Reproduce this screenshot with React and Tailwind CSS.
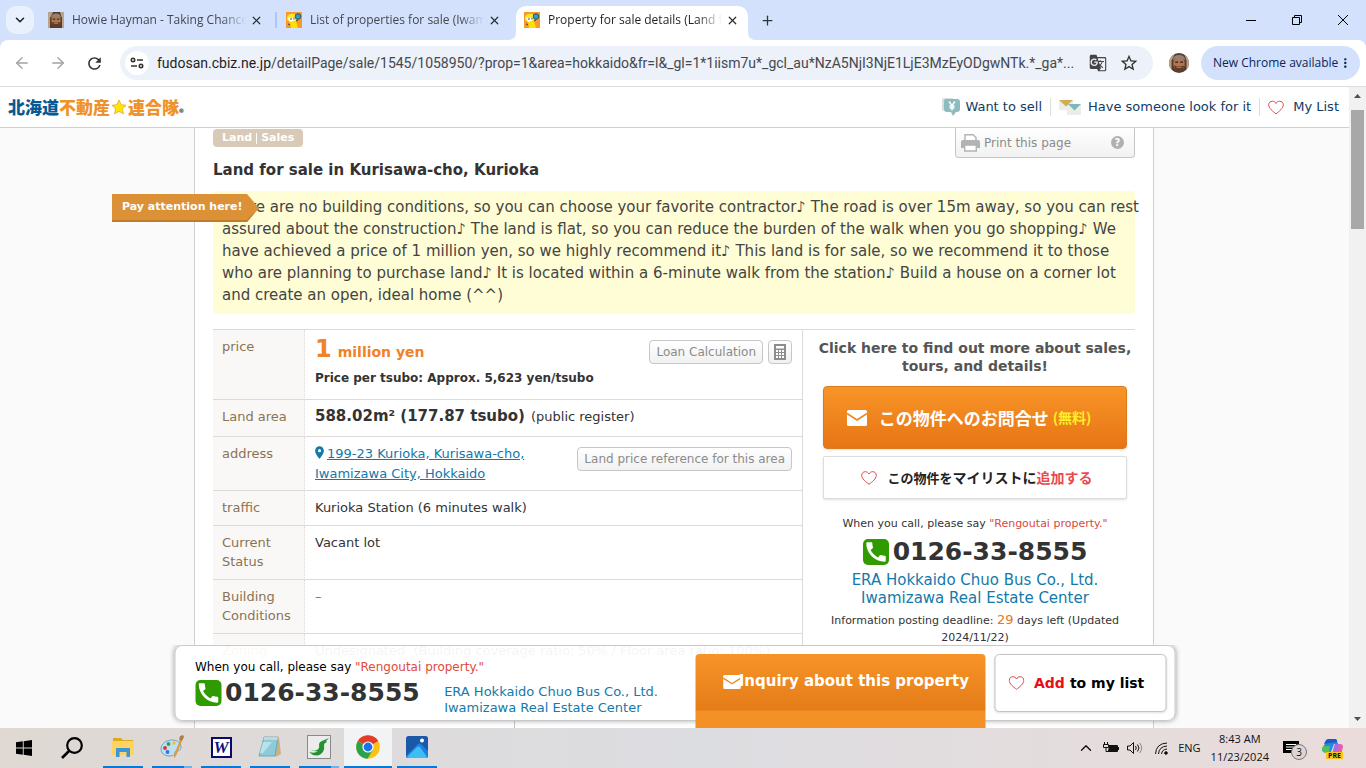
import React from "react";
import { ArrowLeft, ArrowRight, ChevronDown, ChevronUp, Plus, X } from "lucide-react";
import { MdCall, MdGTranslate, MdRefresh, MdStarBorder, MdMoreVert, MdLocationOn } from "react-icons/md";

const ui = "font-['Open_Sans','Noto_Sans',sans-serif]";
const site = "font-['DejaVu_Sans','Noto_Sans_CJK_JP',sans-serif]";

function FaceIcon({ className }) {
  return (
    <svg viewBox="0 0 16 16" className={className} aria-hidden="true">
      <rect width="16" height="16" fill="#5b3a26" />
      <path d="M0 0h5L2 6v10H0zM16 0h-4l2 6v10h2z" fill="#b9a48d" />
      <ellipse cx="8" cy="8.5" rx="4.6" ry="6" fill="#b1764f" />
      <path d="M3 6Q3 1.500 8 1.500T13 6L11.500 4.500h-7z" fill="#8a8580" />
      <path d="M5 7.200h2.200M9 7.200h2.200" stroke="#33190d" strokeWidth="1" />
      <path d="M4 10q4 1.500 8 0-.5 5-4 5t-4-5" fill="#5e3b2b" />
      <path d="M6 11.500h4" stroke="#c0765a" strokeWidth=".8" />
    </svg>
  );
}

function SiteFavicon() {
  return (
    <svg viewBox="0 0 16 16" className="h-4 w-4 shrink-0" aria-hidden="true">
      <rect width="16" height="16" fill="#f79a2a" />
      <path d="M1 5Q3 1 8 2l3 2-1 5-6 1-3-2z" fill="#ffe71c" />
      <path d="M2 5.500l4 .5 3-1.500-.5 4-3.500 1.500-2-1z" fill="#fff" />
      <path d="M4 10l6-1 2 7H5z" fill="#ffe000" />
      <circle cx="12" cy="4.500" r="2.800" fill="#2d9fc6" stroke="#1c3d50" strokeWidth=".8" />
      <path d="M5 6v2M8 5.500v2M2 12l2 1M10 9l2-1" stroke="#333" strokeWidth=".9" />
    </svg>
  );
}

function Mail({ className }) {
  return (
    <svg viewBox="0 0 20 16" className={className} aria-hidden="true">
      <rect width="20" height="16" rx="1.500" fill="#fff" />
      <path d="M0 3.500l10 6.500 10-6.500" fill="none" stroke="#ee8722" strokeWidth="1.600" />
    </svg>
  );
}

function Heart({ className }) {
  return (
    <svg viewBox="0 0 16 14" className={className} fill="none" stroke="#e0474c" aria-hidden="true">
      <path d="M8 13.300C5 11 .7 7.800.7 4.300.7 2.200 2.300.7 4.300.7 6 .7 7.300 1.600 8 3 8.700 1.600 10 .7 11.700.7c2 0 3.600 1.500 3.600 3.600C15.300 7.800 11 11 8 13.300z" />
    </svg>
  );
}

function Tab({ title, icon, active, label }) {
  return (
    <div className={active ? "relative mt-[6px] flex h-[34px] w-[232px] items-center rounded-t-[10px] bg-white pb-[6px] pl-2" : "relative mt-[6px] flex h-[34px] w-[238px] items-center pb-[6px] pl-2"}>
      {active && (
        <svg viewBox="0 0 8 8" className="absolute bottom-0 -left-2 h-2 w-2" aria-hidden="true">
          <path d="M8 0v8H0Q8 8 8 0z" fill="#fff" />
        </svg>
      )}
      {active && (
        <svg viewBox="0 0 8 8" className="absolute -right-2 bottom-0 h-2 w-2" aria-hidden="true">
          <path d="M0 0v8h8Q0 8 0 0z" fill="#fff" />
        </svg>
      )}
      {icon}
      <a
        href="#tab"
        className={active ? "ml-2 w-[174px] overflow-hidden text-[12px] whitespace-nowrap text-[#1f1f1f] [mask-image:linear-gradient(to_right,black_86%,transparent)]" : "ml-2 w-[174px] overflow-hidden text-[12px] whitespace-nowrap text-[#44474e] [mask-image:linear-gradient(to_right,black_86%,transparent)]"}
      >
        {title}
      </a>
      <button aria-label={label} className="ml-[2px] flex h-4 w-4 items-center justify-center text-[#2b2b2e]">
        <X size={13} strokeWidth={2.2} />
      </button>
    </div>
  );
}

function BrowserChrome() {
  return (
    <div className={ui}>
      <div className="flex h-10 items-start bg-[#d3e1fd]">
        <button aria-label="Search tabs" className="mt-[6px] mr-[6px] ml-[6px] flex h-7 w-7 items-center justify-center rounded-[10px] bg-[#eaf1fe]">
          <ChevronDown size={14} strokeWidth={2.6} className="text-[#1f1f1f]" />
        </button>
        <nav aria-label="Tabs" className="flex">
          <Tab label="Close tab 1" title="Howie Hayman - Taking Chance" icon={<FaceIcon className="h-4 w-4 shrink-0" />} />
          <div className="relative flex">
            <span className="absolute top-3 -left-[3px] h-4 w-[2px] bg-[#a8c7fa]" />
            <Tab label="Close tab 2" title="List of properties for sale (Iwam" icon={<SiteFavicon />} />
          </div>
          <Tab active label="Close tab 3" title="Property for sale details (Land fo" icon={<SiteFavicon />} />
        </nav>
        <button aria-label="New tab" className="mt-2 ml-[7px] flex h-6 w-6 items-center justify-center text-[#333]">
          <Plus size={15} strokeWidth={2} />
        </button>
        <div className="ml-auto flex text-black">
          <button aria-label="Minimize" className="flex h-10 w-[46px] items-center justify-center">
            <svg viewBox="0 0 10 10" className="h-[10px] w-[10px]" stroke="currentColor"><path d="M0 5.500h10" /></svg>
          </button>
          <button aria-label="Restore" className="flex h-10 w-[46px] items-center justify-center">
            <svg viewBox="0 0 10 10" className="h-[10px] w-[10px]" fill="none" stroke="currentColor"><path d="M.5 2.500h7v7h-7zM2.500 2.500v-2h7v7h-2" /></svg>
          </button>
          <button aria-label="Close window" className="flex h-10 w-[46px] items-center justify-center">
            <svg viewBox="0 0 10 10" className="h-[10px] w-[10px]" stroke="currentColor"><path d="M0 0l10 10M10 0L0 10" /></svg>
          </button>
        </div>
      </div>
      <div className="bg-[#d3e1fd]">
        <div className="flex h-[47px] items-center rounded-t-[8px] border-b border-[#dedede] bg-white pr-[6px] pl-[13px]">
          <button aria-label="Back" className="mr-[18px] text-[#a3a3a5]"><ArrowLeft size={18} strokeWidth={1.8} /></button>
          <button aria-label="Forward" className="mr-[18px] text-[#a3a3a5]"><ArrowRight size={18} strokeWidth={1.8} /></button>
          <button aria-label="Reload" className="mr-4 text-[#333]"><MdRefresh size={19} /></button>
          <div className="flex h-[34px] min-w-0 flex-1 items-center rounded-full bg-[#ecf1fa] pr-[14px] pl-[5px]">
            <button aria-label="View site information" className="mr-2 flex h-6 w-6 shrink-0 items-center justify-center rounded-full bg-white">
              <svg viewBox="0 0 14 12" className="h-3 w-[14px]" fill="none" stroke="#333" strokeWidth="1.600">
                <circle cx="3" cy="3" r="1.700" /><path d="M7 3h6M1 9h6" /><circle cx="11" cy="9" r="1.700" />
              </svg>
            </button>
            <a href="#url" className="flex-1 truncate font-['Roboto',sans-serif] text-[14px] text-[#45484d]">
              <span className="text-[#1f1f1f]">fudosan.cbiz.ne.jp</span>
              /detailPage/sale/1545/1058950/?prop=1&amp;area=hokkaido&amp;fr=l&amp;_gl=1*1iism7u*_gcl_au*NzA5NjI3NjE1LjE3MzEyODgwNTk.*_ga*...
            </a>
            <button aria-label="Translate this page" className="ml-3 text-[#444]"><MdGTranslate size={18} /></button>
            <button aria-label="Bookmark this tab" className="ml-3 text-[#333]"><MdStarBorder size={20} /></button>
          </div>
          <button aria-label="Profile" className="mr-3 ml-4 h-5 w-5 overflow-hidden rounded-full"><FaceIcon className="h-5 w-5" /></button>
          <button className="flex h-[34px] w-[159px] items-center justify-between rounded-full bg-[#d3e1fd] pr-[7px] pl-3 text-[12px] text-[#0b2559]">
            <span className="whitespace-nowrap">New Chrome available</span>
            <MdMoreVert size={18} />
          </button>
        </div>
      </div>
    </div>
  );
}

function SiteHeader() {
  return (
    <header className="flex h-[41px] shrink-0 items-center border-b border-[#cfcfcf] bg-white pr-[10px] pl-2">
      <a href="#home" className="flex items-center font-['Noto_Sans_CJK_JP',sans-serif] text-[17px] leading-6 font-black">
        <span className="text-[#075a94]">北海道</span>
        <span className="text-[#f0922b]">不動産</span>
        <svg viewBox="0 0 16 16" className="mx-px h-4 w-4" aria-hidden="true">
          <path d="M8 1l2.100 4.700 5 .6-3.700 3.500 1 5L8 12.300 3.600 14.800l1-5L.9 6.300l5-.6z" fill="#ffe800" stroke="#f0a02b" strokeWidth=".8" />
        </svg>
        <span className="text-[#f0922b]">連合隊</span>
        <span className="self-end text-[9px] leading-3 text-[#444]">®</span>
      </a>
      <nav aria-label="Site" className="ml-auto flex items-center text-[13px] whitespace-nowrap text-[#123a63]">
        <a href="#sell" className="flex items-center">
          <svg viewBox="0 0 18 18" className="mr-[5px] h-[18px] w-[18px]" aria-hidden="true">
            <path d="M0 2Q0 0 2 0h9v13H2Q0 13 0 11z" fill="#dcdcd8" />
            <path d="M2 3q0-2 2-2h11q3 0 3 3v7q0 3-3 3h-1l-3 4-2-4H5q-3 0-3-3z" fill="#8abcc0" />
            <path d="M7 3.500l3 4 3-4M10 7.500v5M7.500 8h5M7.500 10h5" fill="none" stroke="#fff" strokeWidth="1.400" />
          </svg>
          Want to sell
        </a>
        <span className="mx-2 h-[18px] w-px bg-[#ddd]" />
        <a href="#look" className="flex items-center">
          <svg viewBox="0 0 22 15" className="mr-[7px] h-[15px] w-[22px]" aria-hidden="true">
            <path d="M0 0h14v10H0zM8 4h14v11H8z" fill="#ecece9" /><path d="M0 0h14L7 6.500z" fill="#d1ad59" /><path d="M9 4h13l-6.500 6.500z" fill="#7db7bd" />
          </svg>
          Have someone look for it
        </a>
        <span className="mx-2 h-[18px] w-px bg-[#ddd]" />
        <a href="#list" className="flex items-center"><Heart className="mr-[9px] h-[15px] w-4" />My List</a>
      </nav>
    </header>
  );
}

const greyButton = "h-6 rounded-[4px] border border-[#c6c6c6] bg-linear-to-b from-white to-[#f1f1f1] text-[12px] whitespace-nowrap text-[#8b8b8b]";

function Row({ label, height, children }) {
  return (
    <tr className={height}>
      <th scope="row" className="w-[92px] border-r border-b border-r-[#ddd] border-b-[#dedbd6] bg-[#faf8f6] [border-right-style:dotted] px-[9px] pt-[7px] pb-[5px] text-left align-top font-normal text-[#8a7355]">{label}</th>
      <td className="border-b border-[#dedbd6] px-[10px] pt-[7px] pb-[5px] align-top">{children}</td>
    </tr>
  );
}

function Details() {
  return (
    <table className="w-[590px] shrink-0 border-separate border-spacing-0 border-r border-[#dedbd6] text-[13px] leading-[19px] text-[#333]">
      <tbody>
        <Row label="price" height="h-[70px]">
          <div className="flex items-start justify-between">
            <div className="font-bold whitespace-nowrap">
              <p className="text-[14px] leading-6 text-[#f08228]"><span className="mr-[6px] text-[24px]">1</span>million yen</p>
              <p className="text-[12px] leading-7">Price per tsubo: Approx. 5,623 yen/tsubo</p>
            </div>
            <div className="mt-[3px] flex gap-[5px]">
              <button className={greyButton + " px-[6px]"}>Loan Calculation</button>
              <button aria-label="Open calculator" className={greyButton + " flex w-6 items-center justify-center"}>
                <svg viewBox="0 0 12 16" className="h-4 w-3" aria-hidden="true">
                  <rect width="12" height="16" fill="#8d8d8d" />
                  <path d="M2 2h8v2.500H2zM2 6h2v2H2zM5 6h2v2H5zM8 6h2v2H8zM2 9h2v2H2zM5 9h2v2H5zM8 9h2v2H8zM2 12h2v2H2zM5 12h2v2H5zM8 12h2v2H8z" fill="#fff" />
                </svg>
              </button>
            </div>
          </div>
        </Row>
        <Row label="Land area" height="h-[37px]">
          <b className="mr-[6px] text-[15px]">588.02m² (177.87 tsubo)</b>(public register)
        </Row>
        <Row label="address" height="h-[54px]">
          <div className="flex items-start justify-between">
            <a href="#map" className="leading-5 whitespace-nowrap text-[#1478a8]">
              <MdLocationOn size={15} className="-ml-[3px] inline-block align-[-2px]" /><span className="underline">199-23 Kurioka, Kurisawa-cho,<br />Iwamizawa City, Hokkaido</span>
            </a>
            <button className={greyButton + " mt-[3px] px-[6px]"}>Land price reference for this area</button>
          </div>
        </Row>
        <Row label="traffic" height="h-[35px]">Kurioka Station (6 minutes walk)</Row>
        <Row label={<>Current<br />Status</>} height="h-[54px]">Vacant lot</Row>
        <Row label={<>Building<br />Conditions</>} height="h-[54px]"><span className="text-[#777]">–</span></Row>
        <Row label="Zoning" height="h-[54px]">Undesignated &nbsp;(Building coverage ratio: 50% / Floor area ratio: 100%)</Row>
      </tbody>
    </table>
  );
}

function Phone() {
  return (
    <span className="flex items-center gap-1">
      <span className="flex h-[26px] w-[26px] items-center justify-center rounded-[5px] bg-[#2f9b00] text-white"><MdCall size={26} /></span>
      <b className="text-[25px] leading-[30px] whitespace-nowrap text-[#333]">0126-33-8555</b>
    </span>
  );
}

function Contact() {
  return (
    <aside className="flex flex-1 flex-col items-center pl-3 text-center text-[#333]">
      <h2 className="mt-[9px] text-[14px] leading-[18px] font-bold whitespace-nowrap text-[#555]">Click here to find out more about sales,<br />tours, and details!</h2>
      <button className="mt-[11px] flex h-[63px] w-[304px] items-center justify-center rounded-[4px] border border-[#dc7a20] bg-linear-to-b from-[#f79427] to-[#e87514] pr-3 font-['Noto_Sans_CJK_JP',sans-serif] text-[17px] font-bold whitespace-nowrap text-white shadow">
        <Mail className="mr-3 h-4 w-5" />この物件へのお問合せ<span className="ml-1 text-[14px] text-[#ffee28]">(無料)</span>
      </button>
      <button className="mt-[7px] flex h-[43px] w-[304px] items-center justify-center rounded-[2px] border border-[#ddd] bg-white pl-1 font-['Noto_Sans_CJK_JP',sans-serif] text-[14px] font-bold whitespace-nowrap text-[#222] shadow-sm">
        <Heart className="mr-[10px] h-[14px] w-4" /><span className="text-[13px]">この物件を</span>マイリストに<span className="text-[#e8494c]">追加する</span>
      </button>
      <p className="mt-4 text-[11px] leading-[18px] whitespace-nowrap">When you call, please say <span className="text-[#d9483e]">"Rengoutai property."</span></p>
      <div className="mt-1"><Phone /></div>
      <a href="#agency" className="mt-1 text-[15px] leading-[18px] whitespace-nowrap text-[#1579aa]">ERA Hokkaido Chuo Bus Co., Ltd.<br />Iwamizawa Real Estate Center</a>
      <p className="mt-1 text-[11px] leading-[17px] whitespace-nowrap">Information posting deadline: <span className="text-[13px] text-[#e87424]">29</span> days left (Updated<br />2024/11/22)</p>
    </aside>
  );
}

function Listing() {
  return (
    <article className="mx-auto h-full w-full max-w-[960px] border-x border-[#d0d0d0] bg-white px-[18px]">
      <div className="flex items-start justify-between">
        <p className="mt-px flex h-[18px] items-center rounded-[4px] bg-[#d8cab6] px-[9px] text-[11px] font-bold text-white">
          Land<span className="mx-1 h-[11px] w-px bg-white" />Sales
        </p>
        <button className="flex h-[30px] w-[180px] items-center rounded-b-[4px] border border-t-0 border-[#c6c6c6] bg-linear-to-b from-white to-[#f1f1f1] px-[5px] text-[12px] text-[#8b8b8b]">
          <svg viewBox="0 0 19 18" className="mr-[4px] h-[18px] w-[19px]" aria-hidden="true">
            <path d="M4 7V.7h8L15 3.500V7" fill="#fff" stroke="#b3b3b3" strokeWidth="1.400" />
            <path d="M0 8q0-2 2-2h15q2 0 2 2v6H0z" fill="#b3b3b3" />
            <path d="M3.700 11h11.600v6H3.700z" fill="#fff" stroke="#b3b3b3" strokeWidth="1.400" />
          </svg>
          Print this page
          <span className="mr-[5px] ml-auto flex h-[13px] w-[13px] items-center justify-center rounded-full bg-[#b0b0b0] text-[10px] font-bold text-white">?</span>
        </button>
      </div>
      <h1 className="text-[15px] leading-6 font-bold text-[#333]">Land for sale in Kurisawa-cho, Kurioka</h1>
      <div className="relative mt-[9px] rounded-[3px] bg-[#fffdd5] px-[9px] pt-[5px] pb-2">
        <p className="text-[15px] leading-[22px] whitespace-nowrap text-[#444]">
          There are no building conditions, so you can choose your favorite contractor♪ The road is over 15m away, so you can rest<br />
          assured about the construction♪ The land is flat, so you can reduce the burden of the walk when you go shopping♪ We<br />
          have achieved a price of 1 million yen, so we highly recommend it♪ This land is for sale, so we recommend it to those<br />
          who are planning to purchase land♪ It is located within a 6-minute walk from the station♪ Build a house on a corner lot<br />
          and create an open, ideal home (^^)
        </p>
        <div className="absolute top-[3px] -left-[101px] flex">
          <span className="flex h-7 w-[135px] items-center border-b-2 border-[#c27a2a] bg-[#dc9136] pl-[10px] text-[11px] font-bold whitespace-nowrap text-white">Pay attention here!</span>
          <svg viewBox="0 0 12 28" className="h-7 w-3" aria-hidden="true"><path d="M0 0l12 14L0 28z" fill="#dc9136" /><path d="M0 26l10.300-10 1.700-2L0 28z" fill="#c27a2a" /></svg>
        </div>
      </div>
      <div className="mt-[15px] flex border-t border-[#dedbd6]">
        <Details />
        <Contact />
      </div>
      <div className="h-10 w-[302px] border-r border-[#c9c6c2]" />
    </article>
  );
}

function ContactBar() {
  return (
    <div className="absolute bottom-0 left-1/2 h-[83px] w-[1011px] -translate-x-1/2 overflow-hidden px-[5px] text-black">
      <div className="flex h-[76px] items-start rounded-[8px] border border-[#c9c9c9] bg-white/95 pr-2 pl-5 shadow-[0_0_5px_rgba(0,0,0,0.35)]">
        <div>
          <p className="mt-3 text-[12px] leading-[18px] whitespace-nowrap">When you call, please say <span className="text-[#e04a3c]">"Rengoutai property."</span></p>
          <div className="mt-[2px]"><Phone /></div>
        </div>
        <a href="#agency" className="mt-[38px] -ml-10 text-[13px] leading-4 whitespace-nowrap text-[#1579aa]">ERA Hokkaido Chuo Bus Co., Ltd.<br />Iwamizawa Real Estate Center</a>
        <div className="ml-auto flex gap-[9px] pt-[8px]">
          <button className="flex h-[75px] w-[290px] items-start justify-end rounded-t-[4px] bg-[linear-gradient(to_bottom,#f79429_0px,#e57c18_56px,#f39026_57px)] pt-4 pr-4 text-[15px] font-bold whitespace-nowrap text-white">
            <Mail className="mt-[5px] -mr-[3px] h-[14px] w-[19px]" />Inquiry about this property
          </button>
          <button className="flex h-[58px] w-[172px] items-center rounded-[5px] border border-[#c4c4c4] bg-white pl-[13px] text-[14px] font-bold whitespace-nowrap shadow-sm">
            <Heart className="mr-[10px] h-[14px] w-4" /><span className="mr-[5px] text-[#e60f14]">Add</span>to my list
          </button>
        </div>
      </div>
    </div>
  );
}

function TaskItem({ label, active, line, children }) {
  return (
    <button aria-label={label} className={active ? "flex h-10 w-12 flex-col items-center bg-[#f2f3f5]" : "flex h-10 w-12 flex-col items-center"}>
      <span className="flex flex-1 items-center">{children}</span>
      {line && <span className={line} />}
    </button>
  );
}

const fullLine = "h-[2px] w-10 bg-[#0a78d6]";
const groupLine = "h-[2px] w-10 bg-[linear-gradient(to_right,#0a78d6_32px,#6fb1ea_32px)]";

function Taskbar() {
  return (
    <footer className={"flex h-10 shrink-0 items-center bg-linear-to-r from-[#dfd8d3] via-[#dcdde1] to-[#eadcda] text-[11px] text-[#111] " + ui}>
      <TaskItem label="Start">
        <svg viewBox="0 0 16 16" className="h-4 w-4"><path d="M0 2.200L6.800 1.300v6.200H0zM7.700 1.200L16 0v7.500H7.700zM0 8.400h6.800v6.300L0 13.700zM7.700 8.400H16V16l-8.300-1.200z" /></svg>
      </TaskItem>
      <TaskItem label="Search">
        <svg viewBox="0 0 22 22" className="h-[22px] w-[22px]" fill="none" stroke="#000" strokeWidth="2.200"><circle cx="13.500" cy="8.500" r="7.300" /><path d="M8 14L1 21" strokeWidth="2.600" /></svg>
      </TaskItem>
      <div className="ml-[3px] flex gap-px">
        <TaskItem label="File Explorer" line={fullLine}>
          <svg viewBox="0 0 22 20" className="h-5 w-[22px]">
            <path d="M1 1h8l2 2h10v15H1z" fill="#e0a91c" /><path d="M0 4h22v14H0z" fill="#fbd463" /><path d="M4 20v-9h14v9h-3.500v-5h-7v5z" fill="#3b95d6" />
          </svg>
        </TaskItem>
        <TaskItem label="Paint" line={groupLine}>
          <svg viewBox="0 0 24 24" className="h-6 w-6">
            <path d="M1 14C1 9 6 5 12 5s9 3 9 7-3 4-5 4 0 5-6 5-9-3-9-7z" fill="#bfe0f3" stroke="#6da5c7" />
            <circle cx="5" cy="13" r="1.900" fill="#d33" /><circle cx="8.500" cy="9" r="1.900" fill="#39a34a" /><circle cx="14" cy="8" r="1.700" fill="#f3c22b" /><circle cx="7.500" cy="17" r="1.900" fill="#3c72d8" />
            <path d="M20 5l2 1-6 15-2 2v-3z" fill="#e1983f" /><path d="M19 5l1-4 3-1 1 2-2 4z" fill="#b07d4d" />
          </svg>
        </TaskItem>
        <TaskItem label="Word" line={fullLine}>
          <span className="flex h-[21px] w-[21px] items-center justify-center border-2 border-[#0a0a6e] bg-white font-['Liberation_Serif',serif] text-[17px] leading-none font-bold text-[#12127e] italic">W</span>
        </TaskItem>
        <TaskItem label="Notepad" line={fullLine}>
          <svg viewBox="0 0 24 22" className="h-[22px] w-6"><path d="M7 1h14l2 17-5 3z" fill="#c9b28a" /><path d="M6 1h14l-3 19H1z" fill="#8ecbd9" stroke="#5d9fb0" strokeWidth=".8" /><path d="M6 1h14l-.5 3h-14z" fill="#c7d4d8" /><path d="M5 6h9L5 17H2z" fill="#b9e3ec" /></svg>
        </TaskItem>
        <TaskItem label="Drawing tablet" line={groupLine}>
          <svg viewBox="0 0 24 24" className="h-6 w-6"><rect x=".5" y=".5" width="23" height="23" fill="#ececec" stroke="#8a8a8a" /><path d="M2 14q4 3 8 1 3-2 2-5 0-3 3-4l7-3-3 3 1 1q-3 1-3 3 1 6-3 9-6 4-12-2 6 2 9-1-5 1-9-2z" fill="#259135" /></svg>
        </TaskItem>
        <TaskItem active label="Chrome" line="h-[2px] w-12 bg-[#0a78d6]">
          <svg viewBox="0 0 24 24" className="h-6 w-6">
            <circle cx="12" cy="12" r="11.800" fill="#fbc116" />
            <path d="M12 12L1.800 6A11.800 11.800 0 0 1 22.200 6z" fill="#e33b2e" />
            <path d="M12 12l-5-2.500L1.800 6A11.800 11.800 0 0 0 11.500 23.800l5.400-9z" fill="#2ba24c" />
            <circle cx="12" cy="12" r="5.600" fill="#fff" /><circle cx="12" cy="12" r="4.400" fill="#1a73e8" />
          </svg>
        </TaskItem>
        <TaskItem label="Photos" line={fullLine}>
          <svg viewBox="0 0 22 22" className="h-[22px] w-[22px]"><rect width="22" height="22" rx="2.500" fill="#1c58a8" /><path d="M0 20L12 8q2-1 3 0l7 7v4.500q0 2.500-2.500 2.500h-17Q0 22 0 20z" fill="#1d7fe0" /><path d="M1 21L11 11q1.500-1 3 0l7 10-1 1H3z" fill="#3dbdf3" /><circle cx="16" cy="4.500" r="2" fill="#fff" /></svg>
        </TaskItem>
      </div>
      <div className="ml-auto flex items-center pr-[23px]">
        <button aria-label="Show hidden icons" className="mr-2"><ChevronUp size={18} strokeWidth={1.800} /></button>
        <svg viewBox="0 0 16 14" className="mr-2 h-[14px] w-4" fill="none" stroke="#111"><path d="M5.500 4.500h9v6h-9" /><path d="M6 5h8v5H5z" fill="#111" stroke="none" /><path d="M15.500 6v3M1.500 1v2M4.500 1v2M.5 3.500h5v3h-5zM3 6.500v4h3" /></svg>
        <svg viewBox="0 0 16 14" className="mr-3 h-[14px] w-4" fill="none" stroke="#111"><path d="M.5 5h2.500l3.500-3.500v11L3 9H.5z" /><path d="M8.500 5q1.500 2 0 4M10.500 3.500q3 3.500 0 7" /><path d="M12.500 2q4.500 5 0 10" stroke="#888" /></svg>
        <svg viewBox="0 0 13 13" className="mr-[10px] h-[13px] w-[13px]" fill="none" stroke="#111"><path d="M.5 12Q1 1.500 12 1M3.500 12Q4 4.500 12 4M6.500 12Q7 7.500 12 7" /><circle cx="11" cy="11" r="1.300" fill="#111" /></svg>
        <span>ENG</span>
        <p className="ml-[10px] text-center leading-[18px]"><span className="block">8:43 AM</span><span className="block">11/23/2024</span></p>
        <button aria-label="Notifications, 3 new" className="relative ml-[14px] h-6 w-6">
          <svg viewBox="0 0 16 15" className="h-[15px] w-4"><path d="M0 0h16v12h-4v3l-3-3H0z" /><path d="M3 3.500h10M3 6h10M3 8.500h6" stroke="#fff" /></svg>
          <span className="absolute right-0 bottom-0 flex h-4 w-4 items-center justify-center rounded-full border border-[#777] bg-[#ddd5d3] text-[10px] leading-none">3</span>
        </button>
        <button aria-label="Copilot preview" className="relative ml-[15px] h-[22px] w-[21px]">
          <svg viewBox="0 0 21 18" className="h-[18px] w-[21px]"><path d="M5 1q1-1 3-1h5q2 0 2 2l1 3h-4L9 13H3Q0 13 0 10z" fill="#1d8ede" /><path d="M2 5l2-4q1-1 3-1h6q2 0 2 3z" fill="#2458c9" /><path d="M0 10l1-3h7l-1 7H3Q0 13 0 10z" fill="#4fc05c" /><path d="M13 5h5q3 0 3 3l-2 8q-1 2-3 2H9z" fill="#e05fb2" /><path d="M13 5h4l-3 8h-3z" fill="#a86be8" /></svg>
          <span className="absolute right-0 bottom-0 bg-[#f7c51e] px-[2px] text-[7px] leading-[7px] font-bold">PRE</span>
        </button>
      </div>
    </footer>
  );
}

function Scrollbar() {
  return (
    <div aria-hidden="true" className="flex w-[17px] shrink-0 flex-col items-center bg-[#f1f1f1]">
      <svg viewBox="0 0 7 4" className="mt-[7px] h-1 w-[7px]" fill="#505050"><path d="M0 4L3.500 0 7 4z" /></svg>
      <span className="mt-3 h-[119px] w-[13px] bg-[#a8a8a8]" />
      <svg viewBox="0 0 7 4" className="mt-auto mb-[7px] h-1 w-[7px]" fill="#505050"><path d="M0 0L3.500 4 7 0z" /></svg>
    </div>
  );
}

export default function App() {
  return (
    <div className="flex h-screen flex-col overflow-hidden bg-white">
      <BrowserChrome />
      <div className="flex min-h-0 flex-1">
        <div className={"relative flex min-w-0 flex-1 flex-col overflow-hidden " + site}>
          <SiteHeader />
          <main className="min-h-0 flex-1 overflow-hidden bg-[#fafafa] pr-px">
            <Listing />
          </main>
          <ContactBar />
        </div>
        <Scrollbar />
      </div>
      <Taskbar />
    </div>
  );
}
